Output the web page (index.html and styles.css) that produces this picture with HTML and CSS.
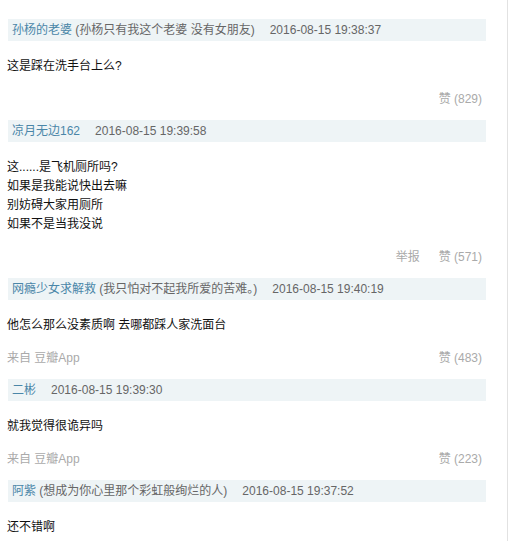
FILE: index.html
```html
<!DOCTYPE html>
<html lang="zh-CN">
<head>
<meta charset="utf-8">
<title>评论</title>
<link rel="stylesheet" href="styles.css">
</head>
<body>
<div class="page">
  <div class="item">
    <div class="head"><span class="name">孙杨的老婆</span> (孙杨只有我这个老婆 没有女朋友)<span class="time">2016-08-15 19:38:37</span></div>
    <div class="content">这是踩在洗手台上么?</div>
    <div class="meta"><span class="from"></span><span class="acts"><span class="like">赞 (829)</span></span></div>
  </div>
  <div class="item">
    <div class="head"><span class="name">凉月无边162</span><span class="time">2016-08-15 19:39:58</span></div>
    <div class="content">这......是飞机厕所吗?<br>如果是我能说快出去嘛<br>别妨碍大家用厕所<br>如果不是当我没说</div>
    <div class="meta"><span class="from"></span><span class="acts"><span class="report">举报</span><span class="like">赞 (571)</span></span></div>
  </div>
  <div class="item">
    <div class="head"><span class="name">网瘾少女求解救</span> (我只怕对不起我所爱的苦难。)<span class="time">2016-08-15 19:40:19</span></div>
    <div class="content">他怎么那么没素质啊 去哪都踩人家洗面台</div>
    <div class="meta"><span class="from">来自 豆瓣App</span><span class="acts"><span class="like">赞 (483)</span></span></div>
  </div>
  <div class="item">
    <div class="head"><span class="name">二彬</span><span class="time">2016-08-15 19:39:30</span></div>
    <div class="content">就我觉得很诡异吗</div>
    <div class="meta"><span class="from">来自 豆瓣App</span><span class="acts"><span class="like">赞 (223)</span></span></div>
  </div>
  <div class="item">
    <div class="head"><span class="name">阿紫</span> (想成为你心里那个彩虹般绚烂的人)<span class="time">2016-08-15 19:37:52</span></div>
    <div class="content">还不错啊</div>
  </div>
</div>
</body>
</html>
```
FILE: styles.css
```css
html, body {
  margin: 0;
  padding: 0;
  background: #fff;
}
body {
  font-family: "Liberation Sans", "Noto Sans CJK SC", sans-serif;
  font-size: 12px;
  height: 541px;
  overflow: hidden;
}
.page {
  width: 479px;
  padding: 19px 21px 0 7px;
  border-right: 1px solid #e2e2e2;
  min-height: 541px;
}
.item {
  padding-bottom: 11px;
}
.head {
  height: 22px;
  line-height: 22px;
  background: #eef4f6;
  padding-left: 4px;
  margin-left: 1px;
  color: #666;
  white-space: nowrap;
}
.name {
  color: #4a86a8;
}
.time {
  margin-left: 15px;
  color: #666;
}
.content {
  margin-top: 16px;
  line-height: 19px;
  color: #111;
}
.meta {
  margin-top: 14px;
  line-height: 19px;
  color: #aaa;
  display: flex;
  justify-content: space-between;
  padding-right: 4px;
}
.report {
  margin-right: 19px;
}
```
